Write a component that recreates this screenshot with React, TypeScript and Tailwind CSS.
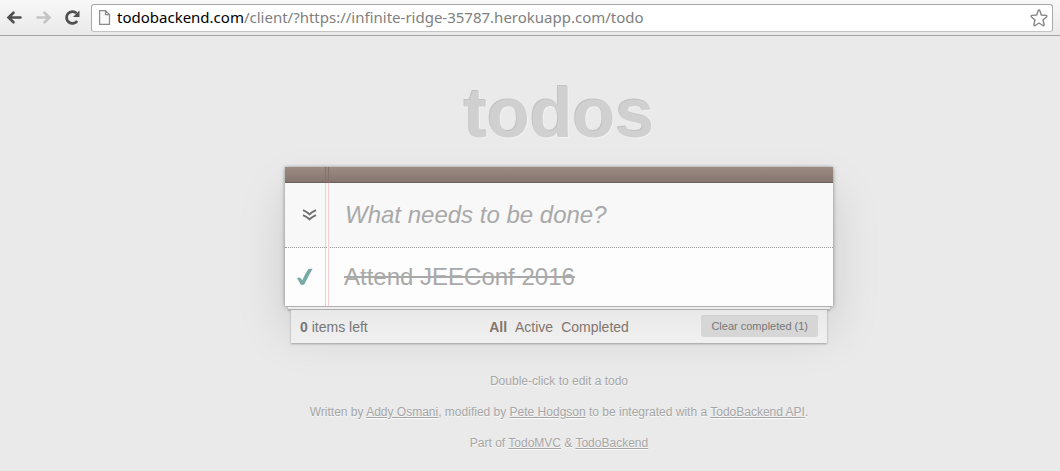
import { useState } from "react";

function BrowserBar() {
  return (
    <div className="flex h-9 items-center border-b border-[#a3a3a3] bg-linear-to-b from-[#f8f8f8] to-[#e9e9e9] pr-[7px] pl-1.5 font-['Noto_Sans',sans-serif]">
      <button type="button" aria-label="Back" className="h-5 w-[29px] text-[#505050]">
        <svg width="17" height="16" viewBox="0 0 17 16" fill="none" stroke="currentColor" strokeWidth="2.6" strokeLinecap="round">
          <path d="M7.500 2.700 2.500 7.500 7.500 12.300M3 7.500H14.500" />
        </svg>
      </button>
      <button type="button" aria-label="Forward" className="h-5 w-[29px] text-[#c4c4c4]">
        <svg width="17" height="16" viewBox="0 0 17 16" fill="none" stroke="currentColor" strokeWidth="2.6" strokeLinecap="round">
          <path d="M9.500 2.700 14.500 7.500 9.500 12.300M14 7.500H2.500" />
        </svg>
      </button>
      <button type="button" aria-label="Reload" className="h-5 w-[27px] text-[#505050]">
        <svg width="18" height="18" viewBox="0 0 18 18" fill="none">
          <path d="M12.500 4.200A5.900 5.900 0 1 0 13.200 12" stroke="currentColor" strokeWidth="2.800" />
          <path d="M15.500 1.500V8H9Z" fill="currentColor" />
        </svg>
      </button>
      <div className="flex h-7 min-w-0 flex-1 items-center rounded-[3px] border border-[#a9a9a9] border-b-[#c4c4c4] bg-white pr-1 pl-1.5">
        <svg width="13" height="17" viewBox="0 0 13 17" fill="#fafafa" stroke="#8b8b8b" strokeWidth="1.200" className="shrink-0">
          <path d="M1.600 1.600H7.500L11.500 5.600V15.400H1.600ZM7.500 1.600V5.600H11.500" />
        </svg>
        <div
          role="textbox"
          aria-label="Address"
          contentEditable
          suppressContentEditableWarning
          spellCheck={false}
          className="ml-1.5 min-w-0 flex-1 overflow-hidden pb-0.5 text-[15px] leading-6 whitespace-nowrap text-[#808080] outline-none"
        >
          <span className="text-black">todobackend.com</span>/client/?https://infinite-ridge-35787.herokuapp.com/todo
        </div>
        <button type="button" aria-label="Bookmark this page">
          <svg width="18" height="18" viewBox="0 0 18 18" fill="none" stroke="#858585" strokeWidth="1.400" strokeLinejoin="round">
            <path d="M9 1C9.500 1 9.800 1.500 10 2L11.300 6 16 6.400C17 6.500 17.200 7.200 16.500 7.900L13 11 14.100 15.600C14.300 16.600 13.700 17 12.900 16.500L9 14 5.100 16.500C4.300 17 3.700 16.600 3.900 15.600L5 11 1.500 7.900C.8 7.200 1 6.500 2 6.400L6.700 6 8 2C8.200 1.500 8.500 1 9 1Z" />
          </svg>
        </button>
      </div>
    </div>
  );
}

function TodoCard() {
  const [done, setDone] = useState(true);
  return (
    <section className="relative bg-[#fdfdfd] shadow-[0_0_3px_rgba(0,0,0,0.3),0_2px_6px_rgba(0,0,0,0.15),0_25px_50px_rgba(0,0,0,0.13)]">
      <div className="h-4 border-b border-[#6c615c] bg-linear-to-b from-[#9d8b83] to-[#84766f]" />
      <div className="flex h-[65px] items-center border-b border-dotted border-[#999] bg-[#f8f8f8]">
        <button type="button" aria-label="Mark all as complete" className="flex w-[60px] justify-start pl-[17px]">
          <svg width="15" height="14" viewBox="0 0 15 14" fill="none" stroke="#6f6f6f" strokeWidth="2">
            <path d="M1 2.200C3.500 3.300 5.500 4.500 7.500 6.300 9.500 4.500 11.500 3.300 14 2.200M1 7.200C3.500 8.300 5.500 9.500 7.500 11.300 9.500 9.500 11.500 8.300 14 7.200" />
          </svg>
        </button>
        <input
          type="text"
          aria-label="New todo"
          placeholder="What needs to be done?"
          className="h-full min-w-0 flex-1 bg-transparent text-2xl outline-none placeholder:text-[#a9a9a9] placeholder:italic"
        />
      </div>
      <ul>
        <li className="flex h-[58px] items-center">
          <label className="relative flex w-[59px] pl-3">
            <input
              type="checkbox"
              aria-label="Completed"
              checked={done}
              onChange={() => setDone(!done)}
              className="peer h-[18px] w-4 appearance-none"
            />
            <svg width="16" height="18" viewBox="0 0 16 18" className="pointer-events-none absolute top-0 left-3 hidden peer-checked:block">
              <path d="M0 10.500C1 9.300 3 9.200 4 10.500L5.200 12.500C7.300 7.800 9.200 4 11.500 1 12.500 .5 14.500 .5 15.500 1 12.800 5.500 10.200 10.500 7.500 16 6.300 17.200 4.500 17.200 3.300 16 2.500 14 1.500 12.300 0 10.500Z" fill="#78aaa5" />
            </svg>
          </label>
          <span className={done ? "text-2xl text-[#a9a9a9] line-through" : "text-2xl text-[#555]"}>Attend JEEConf 2016</span>
        </li>
      </ul>
      <div className="pointer-events-none absolute top-0 bottom-0 left-10 flex w-1 flex-col">
        <div className="h-4 border-x border-[#83706a]" />
        <div className="flex-1 border-x border-[#f0d0d0]" />
      </div>
    </section>
  );
}

function Footer() {
  return (
    <div className="relative">
      <div className="mx-[3px] h-1 border-y border-[#b0b0b0] bg-[#ededed] shadow-[0_1px_2px_rgba(0,0,0,0.2)]" />
      <footer className="mx-1.5 grid h-[33px] grid-cols-[1fr_auto_1fr] items-center bg-linear-to-b from-[#e9e9e9] to-[#f0f0f0] px-[9px] text-sm text-[#777] shadow-[0_1px_2px_rgba(0,0,0,0.3)]">
        <span>
          <strong>0</strong> items left
        </span>
        <nav className="flex gap-2 text-[#83756f]">
          <a href="#/" className="font-bold">All</a>
          <a href="#/active">Active</a>
          <a href="#/completed">Completed</a>
        </nav>
        <button type="button" className="h-[21px] justify-self-end rounded-[3px] bg-[#d6d6d6] px-2.5 text-[11px] text-[#777] shadow-[0_-1px_0_rgba(0,0,0,0.12)]">
          Clear completed (1)
        </button>
      </footer>
    </div>
  );
}

export default function App() {
  return (
    <div className="min-h-screen bg-[#eaeaea] font-['Liberation_Sans',Arial,sans-serif]">
      <BrowserBar />
      <main className="pt-[37px] pl-[58px]">
        <div className="mx-auto max-w-[548px]">
          <h1 className="mb-3.5 text-center text-[70px] leading-20 font-bold text-[#d0d0d0] [text-shadow:-1px_-1px_0_#c2c2c2,1px_1px_0_#f2f2f2]">todos</h1>
          <TodoCard />
          <Footer />
          <div className="mt-[30px] space-y-[15px] text-center text-xs leading-4 text-[#a6a6a6] [text-shadow:0_1px_0_rgba(255,255,255,0.7)]">
            <p>Double-click to edit a todo</p>
            <p>
              Written by <a href="https://github.com/addyosmani" className="underline">Addy Osmani</a>, modified by{" "}
              <a href="https://github.com/moredip" className="underline">Pete Hodgson</a> to be integrated with a{" "}
              <a href="https://todobackend.com" className="underline">TodoBackend API</a>.
            </p>
            <p>
              Part of <a href="https://todomvc.com" className="underline">TodoMVC</a> &amp;{" "}
              <a href="https://todobackend.com" className="underline">TodoBackend</a>
            </p>
          </div>
        </div>
      </main>
    </div>
  );
}
